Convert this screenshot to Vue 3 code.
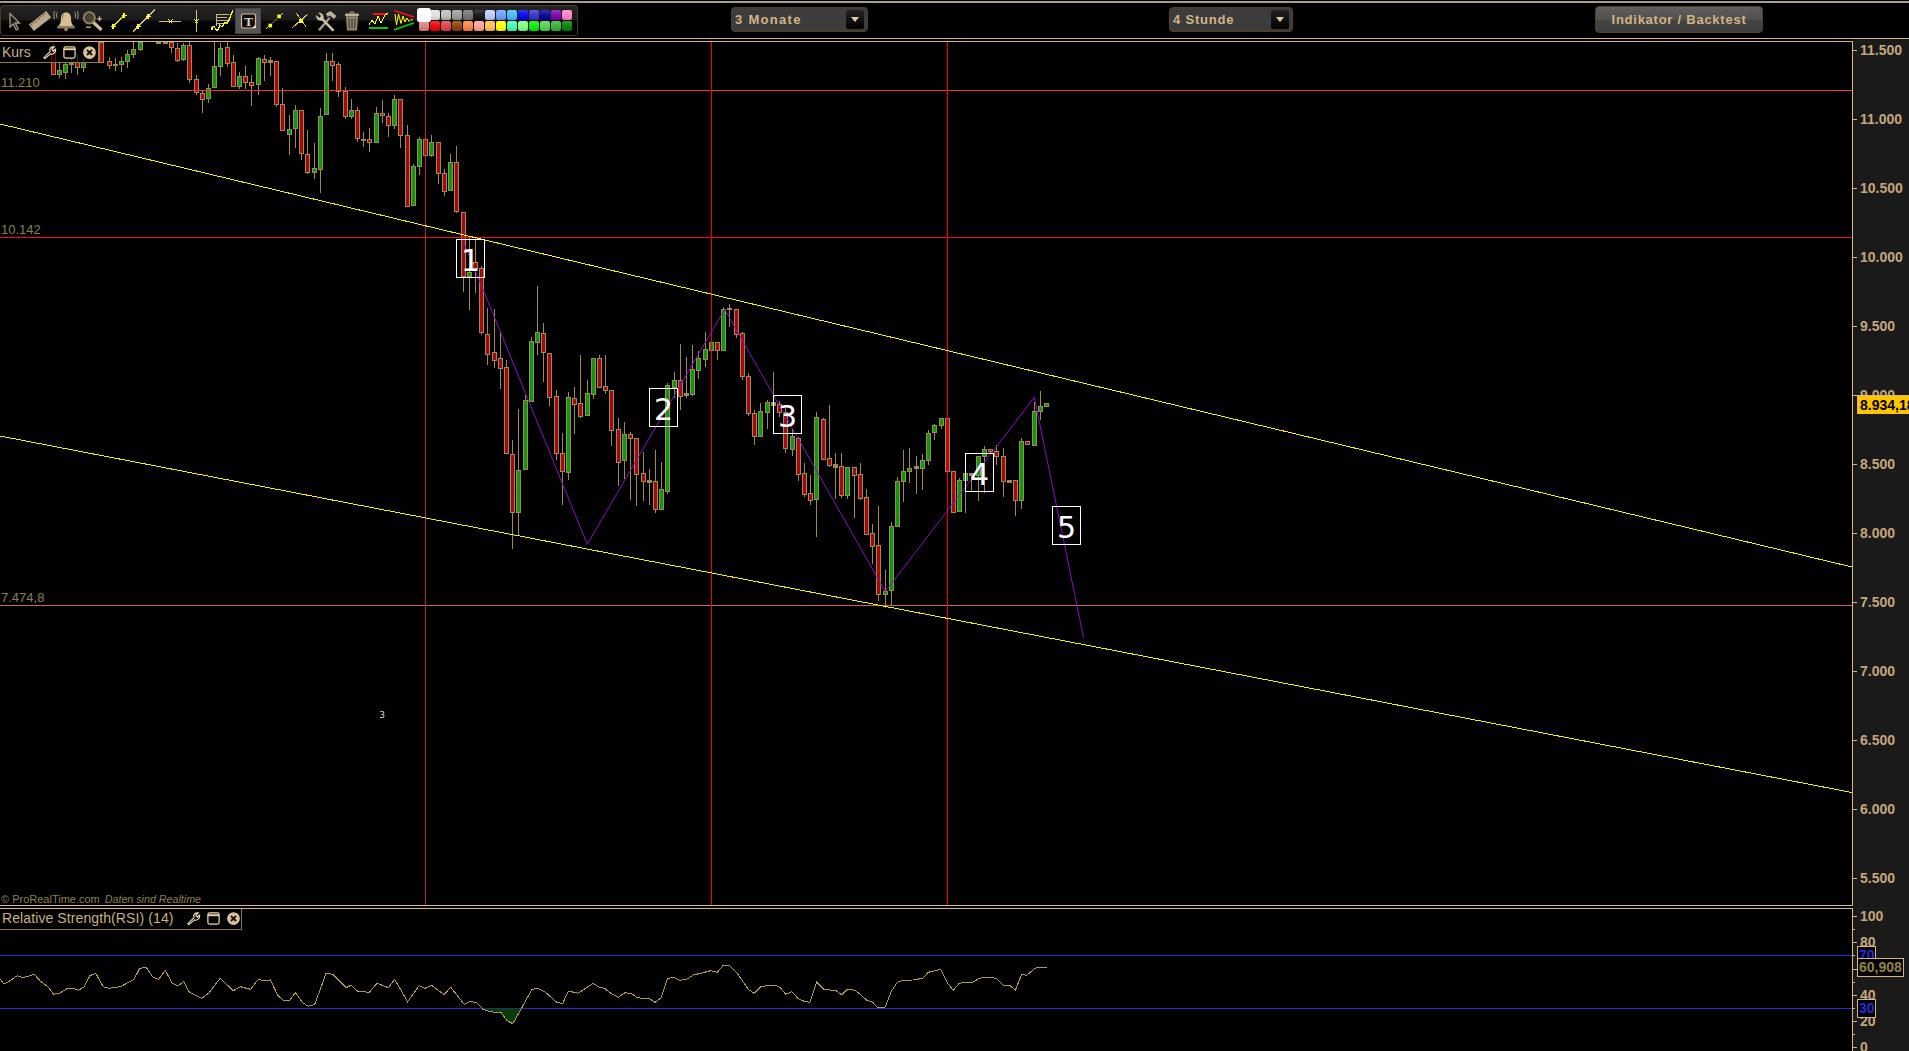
<script setup>
import { computed } from 'vue'

const swatchRows = [
  '#ffffff #e2e2e2 #bdbdbd #9a9a9a #727272 #111111 #b9ccff #6b9dff #3fbcff #0000f0 #3030d4 #0000a0 #7a00b0 #ff80c4',
  '#e07f7f #f00000 #e04040 #8a4000 #ff8040 #ffa094 #ffc040 #ffff00 #40ffb4 #80ff80 #00f000 #50d050 #30b030 #008000',
]
const swatches = swatchRows.flatMap((r) => r.split(' '))

const R = 'R', G = 'G', D = 'D'
// [x, wickTop, bodyTop, bodyBottom, wickBottom, kind], grouped by the origin/scale they were measured in
const groups = [
  { ox: 0, oy: 30, rows: [
    [160,36,70,133,133,R],[178,100,121,133,145,G],[196,96,103,125,146,G],[214,85,95,103,130,D],[232,70,95,112,137,R],[250,88,95,112,128,G],
    [305,36,36,95,100,R],[328,82,94,106,118,R],[346,85,102,106,125,D],[364,80,94,103,125,G],[382,60,72,94,115,G],[400,36,58,73,85,G],[421,36,36,58,62,G],
    [475,36,36,40,42,R],[496,36,36,40,42,G],[514,36,36,52,70,R],[532,40,54,90,96,R],[550,40,45,88,94,G],[568,36,45,148,158,R],[589,135,148,187,194,R],
    [607,180,190,206,250,R],[625,163,175,205,220,G],[643,36,109,172,172,G],[661,40,54,109,138,G],[682,36,52,98,112,R],[700,75,97,169,172,R],
    [718,125,139,169,177,G],[736,108,139,155,176,R],[754,135,157,166,227,R],[775,82,85,163,197,G],[793,75,87,97,152,R],[811,80,91,97,137,D],
    [829,94,94,223,232,R],[847,175,223,301,305,R],[868,255,298,311,375,G],[886,226,241,295,356,G],[904,240,241,370,390,R],[922,300,373,427,433,R],
    [943,340,415,427,447,G],[961,235,259,416,490,G],[979,70,94,253,253,G],[997,68,94,106,152,R],[1015,96,103,184,200,R],[1036,172,184,259,268,R],
    [1054,208,241,259,268,G],[1072,230,241,325,335,R],[1090,305,328,328,350,D],[1108,295,328,337,368,R],[1129,232,250,337,337,G],[1147,210,250,256,280,R],
    [1165,248,259,286,320,R],[1183,196,208,286,298,G],[1201,208,208,316,356,R],[1222,286,316,529,529,R],[1240,403,409,526,526,G],[1258,320,328,409,434,G],
    [1276,316,328,376,376,R],[1294,316,337,376,382,G],[1315,337,337,430,463,R],[1333,418,430,482,500,R],[1351,373,397,479,479,G],[1369,349,397,544,550,R],
    [1390,547,547,737,788,R],[1408,625,725,737,840,G],[1426,625,697,715,790,R],
  ] },
  { ox: 440, oy: 230, rows: [
    [124,108,115,307,315,R],[142,235,313,371,405,R],[162,237,367,389,413,R],[180,305,385,413,477,R],[199,390,412,668,668,R],[217,630,673,845,957,R],
    [235,538,721,845,920,G],[256,495,511,716,716,G],[274,320,334,512,512,G],[292,168,307,335,375,G],[310,280,310,365,458,R],[328,368,370,500,528,R],
    [349,480,499,668,690,R],[367,610,670,722,827,R],[385,487,502,725,750,G],[403,472,505,521,612,R],[421,376,520,557,564,R],[442,450,490,554,554,G],
    [460,383,385,491,506,G],[478,376,385,470,476,R],[496,376,469,481,494,R],[514,481,481,599,650,R],[535,565,598,695,770,R],[553,576,613,691,748,G],
    [571,605,613,623,810,R],[589,625,625,731,830,R],[610,667,730,752,813,R],[628,717,751,755,825,D],[646,660,754,836,848,R],[664,697,778,836,836,G],
    [682,460,466,782,792,G],[703,426,451,471,505,G],[721,343,451,497,540,R],[739,380,490,494,503,D],[757,345,417,491,497,G],[775,362,385,419,445,G],
    [796,305,358,386,411,G],[814,335,337,359,360,G],[832,335,337,361,390,R],[850,232,238,359,359,G],[868,222,234,238,292,D],[889,238,238,313,326,R],
    [907,305,310,437,449,R],[925,430,439,548,560,R],[943,540,550,619,645,R],[961,519,544,619,620,G],[982,510,517,545,597,G],[1000,426,517,525,590,D],
    [1018,512,522,547,560,R],
  ] },
  { ox: 740, oy: 280, rows: [
    [136,385,397,505,520,R],[157,445,468,506,528,G],[175,470,475,581,603,R],[193,550,580,641,652,R],[211,585,640,659,675,R],[229,397,412,658,773,G],
    [250,415,418,536,542,R],[268,376,535,554,563,R],[286,520,553,560,657,D],[304,520,559,644,655,R],[322,560,562,644,657,G],[343,560,562,584,713,R],
    [361,550,583,653,660,R],[379,628,652,761,764,R],[397,733,760,797,852,R],[415,678,796,943,963,R],[436,870,932,943,985,G],[454,727,739,931,980,G],
    [472,590,604,739,740,G],[490,510,574,604,665,G],[508,504,565,574,608,G],[529,528,559,565,641,D],[547,523,541,565,630,G],[565,450,458,541,555,G],
    [583,433,436,457,480,G],[604,415,415,434,447,G],[622,415,415,574,576,R],[640,574,574,697,697,R],[658,595,601,694,695,G],[676,575,580,601,698,G],
    [694,580,580,584,635,D],[715,528,529,585,662,G],[733,498,508,529,640,G],[751,508,508,514,520,R],[769,495,514,529,554,R],[790,504,529,604,651,R],
    [808,601,601,605,605,D],[826,601,601,659,710,R],[844,475,484,659,687,G],[862,484,484,493,493,R],[883,365,394,494,494,G],[901,333,379,394,420,G],
    [919,370,370,379,379,G],
  ] },
]

const fills = { R: '#a80808', G: '#0a9a0a', D: '#a08a50' }
const candles = groups.flatMap(({ ox, oy, rows }) =>
  rows.map(([x, wt, bt, bb, wb, kind]) => {
    const cx = Math.floor(ox + x / 3)
    const top = Math.round(oy + bt / 3)
    return {
      wickX: cx,
      wickY: Math.round(oy + wt / 3),
      wickH: Math.max(1, Math.round((wb - wt) / 3)),
      x: cx - 1.5,
      y: top + 0.5,
      h: Math.max(1, Math.round(oy + bb / 3) - top),
      fill: fills[kind],
    }
  }),
)

const priceLevels = [
  { label: '11.210', y: 90.5, labelY: 87, color: '#e83a36' },
  { label: '10.142', y: 237.5, labelY: 234, color: '#f01010' },
  { label: '7.474,8', y: 605.5, labelY: 602, color: '#c86458' },
]
const verticals = [
  { x: 425.5, color: '#c42020' },
  { x: 711.5, color: '#f40000' },
  { x: 947.5, color: '#f40000' },
]
const wave = '462,238 587.3,544.3 724.7,309.3 885.3,591.7 1034.3,397.3 1083.6,638'
const waveBoxes = [
  { n: 1, x: 456.5, y: 239 },
  { n: 2, x: 649.5, y: 388 },
  { n: 3, x: 773.5, y: 395 },
  { n: 4, x: 965.5, y: 453 },
  { n: 5, x: 1052.5, y: 506 },
]

const priceTicks = [11500, 11000, 10500, 10000, 9500, 9000, 8500, 8000, 7500, 7000, 6500, 6000, 5500].map((p) => ({
  y: Math.round(50 + (11500 - p) * 0.138) + 0.5,
  label: `${Math.floor(p / 1000)}.${String(p % 1000).padStart(3, '0')}`,
}))
const rsiY = (v) => 1047.3 - v * 1.313
const rsiLabels = [100, 80, 40, 20, 0].map((v) => ({ v, y: Math.round(rsiY(v)) + 0.5 }))
const rsiTicks = [100, 90, 80, 70, 60, 50, 40, 30, 20, 10, 0].map((v) => ({ v, y: Math.round(rsiY(v)) + 0.5, major: v % 20 === 0 }))

const rsiA = [
  [0,297],[10,312],[25,303],[45,287],[60,293],[90,283],[105,303],[125,320],[140,343],[155,340],[175,326],[190,325],[205,331],[220,320],[235,287],[250,280],
  [270,320],[285,325],[315,320],[350,298],[365,265],[382,262],[400,292],[415,298],[432,271],[450,310],[465,318],[480,305],[495,337],[527,355],[545,340],
  [575,295],[610,332],[628,320],[655,328],[675,298],[690,302],[707,300],[725,345],[740,361],[757,361],[772,338],[790,367],[805,379],[822,374],[852,280],
  [870,283],[905,323],[917,316],[935,334],[965,337],[985,310],[1015,323],[1031,298],[1065,365],[1095,317],[1110,325],[1128,316],[1160,344],[1178,322],
  [1213,373],[1230,364],[1248,370],[1262,388],[1280,395],[1310,398],[1325,422],[1340,431],[1365,380],[1390,328],[1405,325],[1425,337],[1455,367],[1470,371],
  [1485,333],[1510,340],
].map(([x, y]) => [x / 2.613, 880 + y / 3])
const rsiB = [
  [10,100],[25,110],[45,116],[65,132],[85,142],[105,128],[125,131],[140,142],[155,145],[178,146],[195,157],[213,144],[232,86],[250,82],[270,91],[290,88],
  [310,75],[335,69],[362,62],[382,67],[400,46],[418,46],[440,68],[475,118],[492,130],[513,110],[535,106],[555,106],[570,112],[587,133],[605,125],[625,146],
  [645,155],[660,157],[680,97],[703,119],[737,121],[755,135],[772,118],[795,121],[810,132],[830,151],[848,157],[862,172],[885,172],[905,122],[922,97],[940,91],
  [968,90],[998,85],[1015,67],[1052,58],[1073,100],[1090,121],[1108,100],[1125,97],[1148,97],[1165,87],[1180,82],[1205,82],[1220,86],[1240,105],[1258,105],
  [1276,121],[1295,73],[1310,76],[1335,55],[1345,52],[1370,52],
].map(([x, y]) => [590 + x / 3, 950 + y / 3])
const rsiLine = computed(() => [...rsiA, ...rsiB].map(([x, y]) => `${x.toFixed(1)},${y.toFixed(1)}`).join(' '))
const oversold = '479,1008.5 489.8,1010.7 501.3,1012.7 507,1020.7 512.8,1023.7 522,1008.5'
</script>

<template>
  <div class="app">
    <header class="topbar">
      <nav class="toolbar">
        <button class="tool">
          <svg viewBox="0 0 26 26"><path d="M9 5.5V19l3.2-3 3 6 2-1-3-6H18.5Z" fill="#1c1a16" stroke="#a49a84" stroke-width="1.3"/></svg>
        </button>
        <button class="tool">
          <svg viewBox="0 0 26 26"><g transform="rotate(-38 13 13)"><rect x="2" y="9" width="22" height="8" fill="#bca98a"/><path d="M4 9v3M6.5 9v2M9 9v3M11.5 9v2M14 9v3M16.5 9v2M19 9v3M21.5 9v2" stroke="#6b5c44"/></g></svg>
        </button>
        <button class="tool">
          <svg viewBox="0 0 26 26"><path d="M13 4.5c-3.500 0-5 2.500-5 6 0 4-1 6-3 8h16c-2-2-3-4-3-8 0-3.500-1.500-6-5-6Z" fill="#d6bd92"/><path d="M11 6c-1.200 1-1.500 3-1.500 5" stroke="#8c7850" fill="none"/><rect x="4" y="18" width="18" height="2.5" rx="1" fill="#8c7a5a"/><circle cx="13" cy="21.5" r="1.7" fill="#a8926c"/><path d="M4.5 4C3 6 3 8 4 10M21.5 4c1.500 2 1.500 4 .5 6M2 3C.5 5 .5 8 1.5 11M24 3c1.500 2 1.500 5 .5 8" stroke="#a89c84" fill="none"/></svg>
        </button>
        <button class="tool">
          <svg viewBox="0 0 26 26"><path d="M14 14l7.5 7" stroke="#cdbb9c" stroke-width="3.2" stroke-linecap="round"/><circle cx="10.3" cy="9.8" r="5.7" fill="#4a4232" stroke="#8f8268" stroke-width="1.8"/><path d="M18 10.8h5M20.5 8.3v5M7 19.2h5" stroke="#cdbb9c" stroke-width="1.2"/></svg>
        </button>
        <button class="tool">
          <svg viewBox="0 0 26 26" class="crisp"><path d="M8 18.5 19 7.5" stroke="#e8e030"/><path d="M5.5 18.5h5M8 16v5M16.5 7.5h5M19 5v5" stroke="#ffff20" stroke-width="1.6"/></svg>
        </button>
        <button class="tool">
          <svg viewBox="0 0 26 26" class="crisp"><path d="M2 23.5 24 1.5" stroke="#d8c89c"/><path d="M4.5 18.5h5M7 16v5M14.500 8.5h5M17 6v5" stroke="#ffff20" stroke-width="1.6"/></svg>
        </button>
        <button class="tool">
          <svg viewBox="0 0 26 26" class="crisp"><path d="M2 13.5h22" stroke="#d8bd8e"/><path d="M11.5 11.5l4 4M15.5 11.5l-4 4" stroke="#ffff20" stroke-width="1.2"/></svg>
        </button>
        <button class="tool">
          <svg viewBox="0 0 26 26" class="crisp"><path d="M13.5 1.5v22" stroke="#d8bd8e"/><path d="M11.5 11.5l4 4M15.5 11.5l-4 4" stroke="#ffff20" stroke-width="1.2"/></svg>
        </button>
        <button class="tool">
          <svg viewBox="0 0 26 26" class="crisp"><path d="M7 6.5h13M7 9.5h11M7 12.5h14M7 15.5h12M7 6v12" stroke="#c9b48e"/><path d="M3 22v-3l2-1 2 4h2l2-5 2 2 3-5 2 1 2-3 1-3 3-7" fill="none" stroke="#ffff10" stroke-width="1.3"/></svg>
        </button>
        <button class="tool tool--active">
          <svg viewBox="0 0 26 26"><rect x="6.5" y="6" width="14" height="14" rx="1.5" fill="#0c0c0c" stroke="#d8bd8e" stroke-width="1.2"/><text x="13.5" y="17.5" class="tool-letter">T</text><path d="M17 20h4v-3.5Z" fill="#eadfca"/></svg>
        </button>
        <button class="tool">
          <svg viewBox="0 0 26 26"><rect x="7.5" y="15.7" width="3.6" height="3.6" fill="#ffff10"/><rect x="16.3" y="6.6" width="3.6" height="3.6" fill="#ffff10"/><path d="M11.5 15 16 10.5" stroke="#d8c89c" stroke-dasharray="2 1"/><path d="M5 21 8 18M19 8l3-3" stroke="#d8c89c"/></svg>
        </button>
        <button class="tool">
          <svg viewBox="0 0 26 26" class="crisp"><path d="M5.5 19.5 21.5 5.5M9.5 5.5 19 18.5" stroke="#d8c070"/><circle cx="14" cy="13" r="2.2" fill="#ffff10"/></svg>
        </button>
        <button class="tool">
          <svg viewBox="0 0 26 26"><path d="M5 21.5 16 9l1.5 1.5L7 23Z" fill="#a89c86"/><path d="M13 5.5 17.5 3l6 5-2.500 3-4-3.500L14.500 9Z" fill="#bdb09a"/><path d="M21.5 22 10.5 10.5c.7-2.500-1-6-5.500-6L8 8l-1.500 2L3 7c-.3 4 3 6.500 6 5.500L19.500 23.5Z" fill="#cfc2aa"/></svg>
        </button>
        <button class="tool">
          <svg viewBox="0 0 26 26"><path d="M7 8.5h12l-1 14H8Z" fill="#948a74"/><path d="M10 10.5l.4 10M13 10.5v10M16 10.5l-.4 10" stroke="#3f382a" stroke-width="1.2"/><rect x="6" y="5.5" width="14" height="2.8" rx="1.2" fill="#bfb39a"/><rect x="10.5" y="3.5" width="5" height="2" rx="1" fill="#8f856f"/></svg>
        </button>
        <button class="tool">
          <svg viewBox="0 0 26 26" class="crisp"><path d="M8 5.5h15" stroke="#ff1010" stroke-width="2"/><path d="M4 19.5h19" stroke="#10c010" stroke-width="2"/><path d="M4 17l3-5 3 4 3-8 3 7 4-8 3-2" fill="none" stroke="#ffff10"/></svg>
        </button>
        <button class="tool">
          <svg viewBox="0 0 26 26"><path d="M3 2.5 23 9.2" stroke="#f01010" stroke-width="1.8"/><path d="M3 21.8 23 14.8" stroke="#10b810" stroke-width="1.8"/><path d="M4 6l1.500 11 2-11 2.500 9.500 2-7.500 2 6 2-4 2 3.500 2-2 2 .5" fill="none" stroke="#ffff10"/></svg>
        </button>
        <div class="swatches">
          <span
            v-for="(color, i) in swatches"
            :key="i"
            class="swatch"
            :class="{ 'swatch--active': i === 0 }"
            :style="{ backgroundColor: color }"
          ></span>
        </div>
      </nav>

      <div class="select select--period">
        <span>3 Monate</span>
        <i class="select-arrow"></i>
      </div>
      <div class="select select--interval">
        <span>4 Stunde</span>
        <i class="select-arrow"></i>
      </div>
      <button class="backtest">Indikator / Backtest</button>
    </header>

    <main class="workspace">
      <section class="plot plot--price">
        <svg class="canvas" width="1852" height="863" viewBox="0 42 1852 863">
          <g class="candles">
            <g v-for="(c, i) in candles" :key="i">
              <rect :x="c.wickX" :y="c.wickY" width="1" :height="c.wickH" fill="#a08a50" />
              <rect :x="c.x" :y="c.y" width="4" :height="c.h" :fill="c.fill" stroke="#a08a50" />
            </g>
          </g>
          <g class="crisp">
            <line v-for="l in priceLevels" :key="l.label" x1="0" x2="1852" :y1="l.y" :y2="l.y" :stroke="l.color" />
            <line v-for="v in verticals" :key="v.x" :x1="v.x" :x2="v.x" y1="42" y2="905" :stroke="v.color" />
            <line x1="0" y1="124" x2="1852" y2="567" stroke="#f0f000" />
            <line x1="0" y1="436" x2="1852" y2="792.5" stroke="#f0f000" />
          </g>
          <polyline :points="wave" fill="none" stroke="#8a10c8" />
          <text v-for="l in priceLevels" :key="l.label" x="1" :y="l.labelY" class="level-label">{{ l.label }}</text>
          <g v-for="b in waveBoxes" :key="b.n">
            <rect class="crisp" :x="b.x" :y="b.y" width="28" height="38" fill="none" stroke="#fff" />
            <text :x="b.x + 14" :y="b.y + 32" class="wave-label">{{ b.n }}</text>
          </g>
          <text x="382" y="718" class="marker-label">3</text>
          <text x="1" y="903" class="credit">© ProRealTime.com<tspan dx="5" class="credit-note">Daten sind Realtime</tspan></text>
        </svg>
        <div class="legend legend--price">
          <span class="legend-title">Kurs</span>
          <svg class="legend-icon" viewBox="0 0 16 16"><path d="M3 14.5 2 13.5l6.500-6.500C7.500 4 9.500 1.500 13 2l-2.500 2.500L12 6.500l2.500-2C15 8 12 10.500 9 9.5Z" fill="none" stroke="#eed8b0" stroke-width="1.3"/></svg>
          <svg class="legend-icon" viewBox="0 0 16 16"><rect x="2" y="2" width="12" height="12" rx="2" fill="#060606" stroke="#eed8b0" stroke-width="1.3"/><path d="M2 4.5h12" stroke="#eed8b0" stroke-width="2"/></svg>
          <svg class="legend-icon" viewBox="0 0 16 16"><circle cx="8" cy="8" r="6.8" fill="#dcc196"/><path d="M5.3 5.3l5.4 5.4M10.7 5.3l-5.4 5.4" stroke="#111" stroke-width="2"/></svg>
        </div>
      </section>

      <aside class="axis">
        <svg width="56" height="866" viewBox="1853 39 56 866">
          <g v-for="t in priceTicks" :key="t.label">
            <path :d="`M1853 ${t.y}h4`" stroke="#d8b582" />
            <text x="1860" :y="t.y + 4.5" class="axis-label">{{ t.label }}</text>
          </g>
        </svg>
        <div class="last-price">8.934,18</div>
      </aside>

      <section class="plot plot--rsi">
        <svg class="canvas" width="1852" height="142" viewBox="0 909 1852 142">
          <g class="crisp">
            <line x1="0" x2="1852" y1="955.5" y2="955.5" stroke="#2a2ad8" />
            <line x1="0" x2="1852" y1="1008.5" y2="1008.5" stroke="#2a2ad8" />
          </g>
          <polygon :points="oversold" fill="#0a3c0a" />
          <polyline :points="rsiLine" fill="none" stroke="#b09a55" class="crisp" />
        </svg>
        <div class="legend legend--rsi">
          <span class="legend-title">Relative Strength(RSI) (14)</span>
          <svg class="legend-icon" viewBox="0 0 16 16"><path d="M3 14.5 2 13.5l6.500-6.500C7.500 4 9.500 1.500 13 2l-2.500 2.500L12 6.500l2.500-2C15 8 12 10.500 9 9.5Z" fill="none" stroke="#eed8b0" stroke-width="1.3"/></svg>
          <svg class="legend-icon" viewBox="0 0 16 16"><rect x="2" y="2" width="12" height="12" rx="2" fill="#060606" stroke="#eed8b0" stroke-width="1.3"/><path d="M2 4.5h12" stroke="#eed8b0" stroke-width="2"/></svg>
          <svg class="legend-icon" viewBox="0 0 16 16"><circle cx="8" cy="8" r="6.8" fill="#dcc196"/><path d="M5.3 5.3l5.4 5.4M10.7 5.3l-5.4 5.4" stroke="#111" stroke-width="2"/></svg>
        </div>
      </section>

      <aside class="axis axis--rsi">
        <svg width="56" height="145" viewBox="1853 906 56 145">
          <path v-for="t in rsiTicks" :key="t.v" :d="`M1853 ${t.y}h${t.major ? 4 : 2}`" stroke="#d8b582" />
          <text v-for="t in rsiLabels" :key="t.v" x="1860" :y="t.y + 4" class="axis-label">{{ t.v }}</text>
        </svg>
        <div class="level-tag level-tag--70">70</div>
        <div class="level-tag level-tag--value">60,908</div>
        <div class="level-tag level-tag--30">30</div>
      </aside>
    </main>
  </div>
</template>

<style scoped>
.app {
  width: 1909px;
  height: 1051px;
  padding-top: 1px;
  box-sizing: border-box;
  background: #000;
  overflow: hidden;
  font-family: "Liberation Sans", Arial, sans-serif;
}

.topbar {
  display: flex;
  align-items: center;
  height: 37px;
  box-sizing: border-box;
  border-top: 2px solid #a89e90;
}

.toolbar {
  display: flex;
  align-items: center;
  flex: none;
  width: 578px;
  height: 31px;
  box-sizing: border-box;
  border: 1.5px solid #4e381c;
  border-radius: 3px;
  background: linear-gradient(#242424 0, #1a1a1a 48%, #060606 52%, #000 100%);
}

.tool {
  flex: none;
  width: 26px;
  height: 26px;
  padding: 0;
  border: 0;
  background: none;
}

.tool svg {
  display: block;
  width: 26px;
  height: 26px;
  overflow: visible;
}

.tool--active {
  background: #555;
  box-shadow: inset 0 0 0 1px #444;
}

.tool-letter {
  font-family: "Liberation Serif", serif;
  font-size: 13px;
  font-weight: 700;
  text-anchor: middle;
  fill: #e8d4ae;
}

.crisp {
  shape-rendering: crispEdges;
}

.swatches {
  display: grid;
  grid-template-columns: repeat(14, 10px);
  grid-auto-rows: 10px;
  gap: 1px;
  margin-left: 2px;
}

.swatch {
  border-radius: 2px;
  background-image: linear-gradient(rgba(255, 255, 255, 0.22), rgba(255, 255, 255, 0.05) 50%, rgba(0, 0, 0, 0.12));
}

.swatch--active {
  transform: scale(1.4);
  background-image: none;
}

.select {
  display: flex;
  align-items: center;
  justify-content: space-between;
  flex: none;
  height: 25px;
  box-sizing: border-box;
  margin-bottom: 2px;
  padding: 0 3px;
  border: 1.5px solid #5a3f1f;
  border-radius: 4px;
  background: #3c3c3c;
  color: #d4b483;
  font-size: 13px;
  font-weight: 700;
  letter-spacing: 0.8px;
}

.select--period {
  width: 137px;
  margin-left: 153px;
  letter-spacing: 1.3px;
}

.select--interval {
  width: 124px;
  margin-left: 301px;
}

.select-arrow {
  position: relative;
  width: 18px;
  height: 19px;
  border-radius: 2px;
  background: linear-gradient(#222, #000);
}

.select-arrow::after {
  content: "";
  position: absolute;
  left: 5px;
  top: 7px;
  border-style: solid;
  border-width: 5px 4px 0;
  border-color: #e4cda4 transparent transparent;
}

.backtest {
  flex: none;
  width: 168px;
  height: 27px;
  margin: 0 0 2px 302px;
  padding: 0;
  border: 1.5px solid #5a3f1f;
  border-radius: 4px;
  background: linear-gradient(#5e5e5e, #505050 50%, #434343 55%, #3e3e3e);
  color: #d4b483;
  font-family: inherit;
  font-size: 13px;
  font-weight: 700;
  letter-spacing: 0.75px;
}

.workspace {
  display: grid;
  grid-template-columns: 1853px 56px;
  grid-template-rows: 867px 145px;
  border-top: 1px solid #d8b582;
}

.plot {
  position: relative;
  box-sizing: border-box;
  margin-top: 2px;
  border-top: 1px solid #d8b582;
  border-right: 1px solid #d8b582;
  overflow: hidden;
}

.plot--price {
  height: 865px;
  border-bottom: 1px solid #d8b582;
}

.plot--rsi {
  height: 143px;
}

.canvas {
  display: block;
}

.level-label {
  font-size: 13px;
  fill: #8a8050;
}

.wave-label {
  font-family: "DejaVu Sans", sans-serif;
  font-size: 30px;
  text-anchor: middle;
  fill: #fff;
}

.marker-label {
  font-family: "DejaVu Sans", sans-serif;
  font-size: 9px;
  text-anchor: middle;
  fill: #d8d8d8;
}

.credit {
  font-size: 11px;
  fill: #8a8050;
}

.credit-note {
  font-size: 10.7px;
  font-style: italic;
}

.legend {
  position: absolute;
  top: 0;
  left: 0;
  display: flex;
  align-items: center;
  box-sizing: border-box;
  height: 21px;
  padding-left: 2px;
  border-right: 1px solid #8a7a50;
  border-bottom: 1px solid #8a7a50;
  background: rgba(0, 0, 0, 0.72);
}

.legend--price {
  width: 99px;
}

.legend--rsi {
  width: 242px;
  padding-bottom: 2px;
}

.legend-title {
  color: #c8b080;
  font-size: 14px;
}

.legend-icon {
  flex: none;
  width: 15px;
  height: 15px;
  margin-left: 5px;
}

.legend--price .legend-title {
  margin-right: 6px;
}

.legend--rsi .legend-title {
  margin-right: 7px;
  letter-spacing: 0.1px;
}

.axis {
  position: relative;
  background: #1a1a1a;
}

.axis svg {
  display: block;
}

.axis-label {
  font-size: 14px;
  font-weight: 700;
  fill: #c4a77d;
}

.last-price {
  position: absolute;
  top: 356px;
  left: 4px;
  width: 52px;
  height: 19px;
  padding-left: 2px;
  box-sizing: border-box;
  overflow: hidden;
  background: #ffc400;
  border-top: 1px solid #d8b582;
  border-left: 1px solid #d8b582;
  color: #000;
  font-size: 14px;
  font-weight: 700;
  line-height: 18px;
  white-space: nowrap;
}

.level-tag {
  position: absolute;
  left: 4px;
  box-sizing: border-box;
  height: 18.5px;
  padding: 0 1px;
  border: 1px solid #d8b582;
  background: #000;
  color: #2a2ad8;
  font-size: 14px;
  font-weight: 700;
  line-height: 17px;
}

.level-tag--70 {
  top: 40px;
  width: 19px;
}

.level-tag--value {
  top: 52px;
  width: 47px;
  color: #8f8548;
}

.level-tag--30 {
  top: 93px;
  width: 19px;
}
</style>
